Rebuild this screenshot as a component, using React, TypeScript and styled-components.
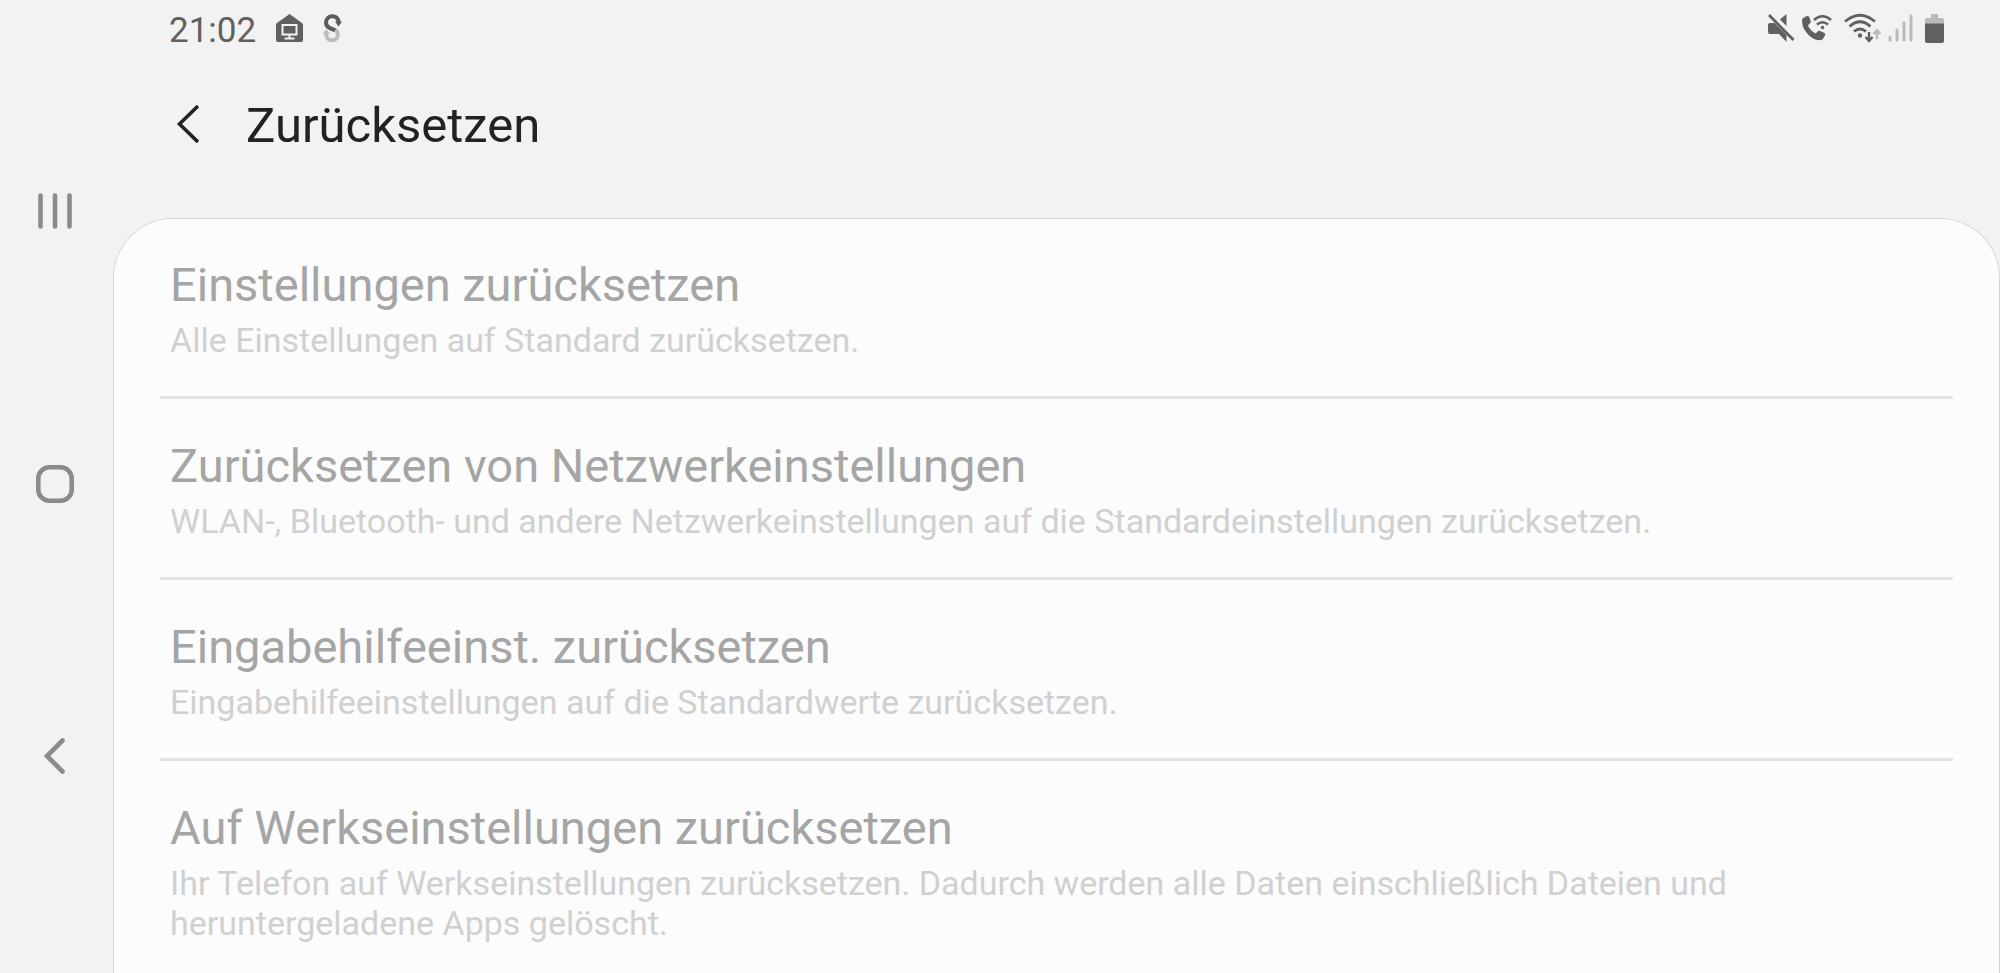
import React from 'react';
import styled, { createGlobalStyle } from 'styled-components';

const GlobalStyle = createGlobalStyle`
  *, *::before, *::after { box-sizing: border-box; }
  html, body, #root { height: 100%; }
  body { margin: 0; background: #f2f2f2; font-family: Roboto, "Liberation Sans", sans-serif; color: #222; }
  button { font: inherit; border: 0; padding: 0; background: none; color: inherit; }
  svg { display: block; }
`;

const Screen = styled.div`
  display: flex;
  height: 100%;
`;

const NavRail = styled.nav`
  flex: none;
  width: 113px;
  padding: 171px 3px 177px 0;
  display: flex;
  flex-direction: column;
  align-items: center;
  justify-content: space-between;
  color: #8b8b8b;
`;

const NavButton = styled.button`
  width: 80px;
  height: 80px;
  display: grid;
  place-items: center;
`;

const Main = styled.div`
  flex: 1;
  min-width: 0;
  display: flex;
  flex-direction: column;
`;

const StatusBar = styled.header`
  flex: none;
  height: 56px;
  padding: 0 56px;
  display: flex;
  align-items: center;
  justify-content: space-between;
  color: #606060;
`;

const StatusGroup = styled.div<{ $gap: number }>`
  display: flex;
  align-items: center;
  gap: ${(p) => p.$gap}px;
`;

const Clock = styled.time`
  font-size: 35px;
  line-height: 40px;
  padding-top: 6px;
`;

const TitleBar = styled.div`
  flex: none;
  height: 162px;
  padding: 34px 56px 0;
  display: flex;
  align-items: flex-start;
  gap: 41px;
`;

const BackButton = styled.button`
  width: 36px;
  height: 68px;
  display: grid;
  place-items: center;
`;

const Title = styled.h1`
  margin: 0;
  font-size: 49px;
  line-height: 72px;
  font-weight: 400;
`;

const Card = styled.ul`
  flex: 1;
  min-height: 0;
  overflow-y: auto;
  scrollbar-width: none;
  margin: 0;
  padding: 0 46px;
  list-style: none;
  background: #fcfcfc;
  border: 1px solid #d6d6d6;
  border-bottom: 0;
  border-radius: 60px 60px 0 0;
`;

const ItemButton = styled.button`
  display: block;
  width: 100%;
  padding: 35px 10px 36px;
  text-align: left;
`;

const Item = styled.li`
  & + & { border-top: 3px solid #e3e3e3; }
  &:first-child ${ItemButton} { padding-top: 34px; }
`;

const ItemTitle = styled.span`
  display: block;
  font-size: 47px;
  line-height: 64px;
  color: #a5a5a5;
`;

const ItemText = styled.span`
  display: block;
  margin-top: 3px;
  font-size: 34px;
  line-height: 40px;
  color: #d0d0d0;
`;

const items = [
  ['Einstellungen zurücksetzen', 'Alle Einstellungen auf Standard zurücksetzen.'],
  ['Zurücksetzen von Netzwerkeinstellungen', 'WLAN-, Bluetooth- und andere Netzwerkeinstellungen auf die Standardeinstellungen zurücksetzen.'],
  ['Eingabehilfeeinst. zurücksetzen', 'Eingabehilfeeinstellungen auf die Standardwerte zurücksetzen.'],
  ['Auf Werkseinstellungen zurücksetzen', 'Ihr Telefon auf Werkseinstellungen zurücksetzen. Dadurch werden alle Daten einschließlich Dateien und heruntergeladene Apps gelöscht.'],
];

const HomeDeviceIcon = () => (
  <svg width="27" height="28" viewBox="0 0 27 28" aria-hidden="true">
    <path fill="currentColor" d="M13.500 0 26 9q1 1 1 2v15q0 2-2 2H2q-2 0-2-2V11q0-1 1-2z" />
    <path fill="none" stroke="#f2f2f2" strokeWidth="2" d="M6.500 11h14v9.500h-14zM13.500 20.500V24" />
    <path fill="none" stroke="#f2f2f2" strokeWidth="2" d="M8.500 24.500h10" />
  </svg>
);

const SyncIcon = () => (
  <svg width="19" height="29" viewBox="0 0 19 29" fill="none" strokeWidth="4" aria-hidden="true">
    <path stroke="#bdbdbd" d="M9 14.500c8 1 7.500 11.800 0 11.800-3.500 0-5.800-2.300-5.800-6.300" />
    <path fill="#bdbdbd" d="M0 20 3 15l4 5z" />
    <path stroke="#5c5c5c" d="M12 16.500C8 14 3 14 3 8.500c0-8 12.500-8.500 12.500-.5" />
    <path fill="#5c5c5c" d="M12 7.500h7l-3.500 5z" />
  </svg>
);

const MutedIcon = () => (
  <svg width="27" height="28" viewBox="0 0 27 28" fill="currentColor" aria-hidden="true">
    <path d="M18.500 0v12l-6.500-6.500zM2 9h4.500l12 12v7L11 20H2q-2 0-2-2v-7q0-2 2-2z" />
    <path fill="none" stroke="currentColor" strokeWidth="2.800" d="m1 1 24.500 25" />
  </svg>
);

const WifiCallIcon = () => (
  <svg width="30" height="28" viewBox="0 0 30 28" fill="currentColor" aria-hidden="true">
    <path d="M1 4 5 2q1.500-.5 2.200 1l1.800 5-3 3.500q2.500 5.500 7.500 8l3.500-3 5.500 2.500q1.500 1 .5 2.500l-2.500 4q-4 2-9.500-1Q0 17 0 7q0-2 1-3z" />
    <g fill="none" stroke="currentColor" strokeWidth="2.600">
      <path d="M12 6q8.500-7.500 17 0" />
      <path d="M15 10.500q5.500-4.500 11 0" />
    </g>
    <circle cx="20.500" cy="13.500" r="1.700" />
  </svg>
);

const WifiIcon = () => (
  <svg width="37" height="30" viewBox="0 0 37 30" fill="none" strokeWidth="2.800" aria-hidden="true">
    <path stroke="currentColor" d="M1 8.500q15-12.500 30 0M5.500 13.500q10.500-9.500 21 0M10 18.500q6-5 12 0" />
    <path stroke="currentColor" strokeWidth="2.400" d="M25 19v9M21.500 24l3.500 4 3.500-4" />
    <circle cx="16" cy="22.500" r="2.200" fill="currentColor" />
    <path stroke="#bababa" strokeWidth="2.400" d="M33 26v-9M29.500 21l3.500-4 3.500 4" />
  </svg>
);

const SignalIcon = () => (
  <svg width="25" height="28" viewBox="0 0 25 28" fill="none" stroke="#bababa" strokeWidth="3" strokeLinecap="round" aria-hidden="true">
    <path d="M2 23v3M9 16v10M16 9v17M23 2v24" />
  </svg>
);

const BatteryIcon = () => (
  <svg width="19" height="29" viewBox="0 0 19 29" aria-hidden="true">
    <path fill="#bababa" d="M6 0h7v4h4q2 0 2 2v4H0V6q0-2 2-2h4z" />
    <path fill="currentColor" d="M0 9.500h19V27q0 2-2 2H2q-2 0-2-2z" />
  </svg>
);

export default function App() {
  return (
    <>
      <GlobalStyle />
      <Screen>
        <NavRail>
          <NavButton aria-label="Letzte Apps">
            <svg width="34" height="36" viewBox="0 0 34 36" stroke="currentColor" strokeWidth="4.600" strokeLinecap="round">
              <path d="M2.500 2.500v31M17 2.500v31M31.500 2.500v31" />
            </svg>
          </NavButton>
          <NavButton aria-label="Startseite">
            <svg width="38" height="38" viewBox="0 0 38 38" fill="none" stroke="currentColor" strokeWidth="4.600">
              <rect x="2.300" y="2.300" width="33.400" height="33.400" rx="11" />
            </svg>
          </NavButton>
          <NavButton aria-label="Zurück">
            <svg width="22" height="36" viewBox="0 0 22 36" fill="none" stroke="currentColor" strokeWidth="4.600" strokeLinecap="round">
              <path d="M18.500 2.500 3 18l15.500 15.500" />
            </svg>
          </NavButton>
        </NavRail>
        <Main>
          <StatusBar>
            <StatusGroup $gap={20}>
              <Clock>21:02</Clock>
              <HomeDeviceIcon />
              <SyncIcon />
            </StatusGroup>
            <StatusGroup $gap={12}>
              <StatusGroup $gap={7}>
                <MutedIcon />
                <WifiCallIcon />
              </StatusGroup>
              <StatusGroup $gap={7}>
                <WifiIcon />
                <SignalIcon />
              </StatusGroup>
              <BatteryIcon />
            </StatusGroup>
          </StatusBar>
          <TitleBar>
            <BackButton aria-label="Nach oben">
              <svg width="24" height="38" viewBox="0 0 24 38" fill="none" stroke="currentColor" strokeWidth="3.600">
                <path d="M23 1 4.500 19 23 37" />
              </svg>
            </BackButton>
            <Title>Zurücksetzen</Title>
          </TitleBar>
          <Card>
            {items.map(([title, text]) => (
              <Item key={title}>
                <ItemButton>
                  <ItemTitle>{title}</ItemTitle>
                  <ItemText>{text}</ItemText>
                </ItemButton>
              </Item>
            ))}
          </Card>
        </Main>
      </Screen>
    </>
  );
}
